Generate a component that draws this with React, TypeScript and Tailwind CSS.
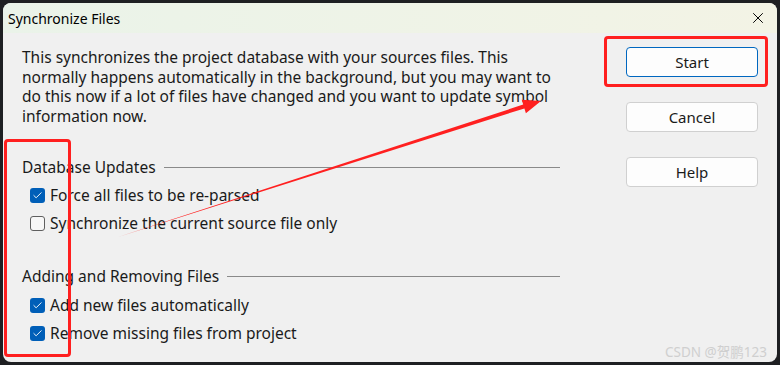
import { Check, X } from "lucide-react";

const font = { fontFamily: '"Noto Sans", "Noto Sans CJK SC", sans-serif' };

function Box({ checked }: { checked: boolean }) {
  return checked ? (
    <span className="flex h-[15px] w-[15px] shrink-0 items-center justify-center rounded-[3px] bg-[#005fb8]">
      <Check size={11} strokeWidth={2} className="text-white" />
    </span>
  ) : (
    <span className="h-[15px] w-[15px] shrink-0 rounded-[3px] border border-[#5f5f5f] bg-[#f7f7f7]" />
  );
}

function Row({ checked, label }: { checked: boolean; label: string }) {
  return (
    <div className="flex h-[28px] items-center gap-[5px] pl-[8px]">
      <Box checked={checked} />
      <span>{label}</span>
    </div>
  );
}

function Group({ title }: { title: string }) {
  return (
    <div className="flex h-[20px] items-center gap-[8px]">
      <span className="whitespace-nowrap">{title}</span>
      <span className="h-px flex-1 bg-[#8a8a8a]" />
    </div>
  );
}

function Btn({ label, primary }: { label: string; primary?: boolean }) {
  return (
    <button
      className={`h-[30px] w-[132px] rounded-[4px] bg-[#fdfdfd] text-[15px] text-[#1a1a1a] ${
        primary ? "border border-[#0067c0]" : "border border-[#d0d0d0]"
      }`}
    >
      {label}
    </button>
  );
}

export default function App() {
  return (
    <div className="relative h-[365px] w-[780px] overflow-hidden bg-[#1e1f22] pl-[3px] pt-[3px]" style={font}>
      {/* ── Window ── */}
      <div className="flex h-[359px] w-[774px] flex-col overflow-hidden rounded-[8px] bg-[#f0f0f0] text-[15.5px] text-[#1a1a1a]">
        {/* title bar */}
        <div className="flex h-[30px] shrink-0 items-center justify-between bg-gradient-to-r from-[#eaf3e9] to-[#f3f3e5] pl-[5px] pr-[10px]">
          <span className="text-[14px] text-black">Synchronize Files</span>
          <X size={18} strokeWidth={1.3} className="text-black" />
        </div>

        {/* body */}
        <div className="flex flex-1">
          <div className="w-[557px] pl-[19px] pt-[15px]">
            <p className="whitespace-nowrap leading-[19.7px]">
              This synchronizes the project database with your sources files. This
              <br />
              normally happens automatically in the background, but you may want to
              <br />
              do this now if a lot of files have changed and you want to update symbol
              <br />
              information now.
            </p>

            <div className="mt-[31px]">
              <Group title="Database Updates" />
              <div className="mt-[4px]">
                <Row checked label="Force all files to be re-parsed" />
                <Row checked={false} label="Synchronize the current source file only" />
              </div>
            </div>

            <div className="mt-[29px]">
              <Group title="Adding and Removing Files" />
              <div className="mt-[5px]">
                <Row checked label="Add new files automatically" />
                <Row checked label="Remove missing files from project" />
              </div>
            </div>
          </div>

          <div className="ml-[66px] flex flex-col gap-[25px] pt-[14px]">
            <Btn label="Start" primary />
            <Btn label="Cancel" />
            <Btn label="Help" />
          </div>
        </div>
      </div>

      {/* ── Annotations ── */}
      <div className="absolute left-[604px] top-[36px] h-[51px] w-[164px] rounded-[4px] border-[3px] border-[#ff1f1f]" />
      <div className="absolute left-[4px] top-[139px] h-[218px] w-[67px] rounded-[4px] border-[3px] border-[#ff1f1f]" />
      <svg className="absolute left-0 top-0" width="780" height="365">
        <polygon
          points="118,237 523.2,104.6 521.7,99.8 541,101 525.9,113.2 524.4,108.4"
          fill="#ff2020"
        />
      </svg>
      <span className="absolute left-[665px] top-[342px] whitespace-nowrap text-[13.5px] text-[#cfcfcf]">
        CSDN @贺鹏123
      </span>
    </div>
  );
}
